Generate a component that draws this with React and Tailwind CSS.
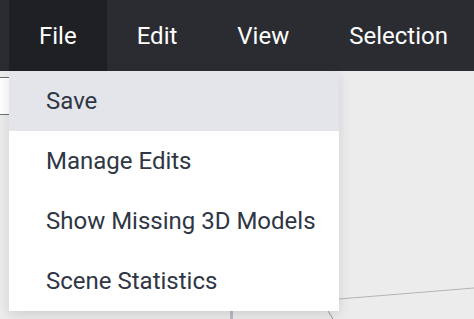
import React from 'react';

const menus = ['File', 'Edit', 'View', 'Selection'];
const fileItems = ['Save', 'Manage Edits', 'Show Missing 3D Models', 'Scene Statistics'];

const App = () => {
  return (
    <div className="w-[474px] h-[319px] overflow-hidden bg-[#ececec] flex flex-col" style={{ fontFamily: 'Roboto, "Liberation Sans", sans-serif' }}>
      {/* Barra de menús */}
      <div className="h-[71px] shrink-0 bg-[#2b2c31] flex pl-[9px]">
        {menus.map((m, i) => (
          <div
            key={m}
            className={`px-[30px] flex items-center text-[24px] text-white ${i === 0 ? 'bg-[#1f2023]' : ''}`}
          >
            {m}
          </div>
        ))}
      </div>

      {/* Lienzo */}
      <div className="relative flex-1">
        <div className="absolute left-0 top-[6px] w-[9px] h-[38px] bg-white border-y border-[#6b6f75]" />
        <svg className="absolute inset-0" width="474" height="248" viewBox="0 71 474 248">
          <line x1="339" y1="299" x2="474" y2="288" stroke="#b4b4b4" strokeWidth="1" />
          <line x1="328" y1="311" x2="333" y2="319" stroke="#9a9a9a" strokeWidth="1" />
          <rect x="230" y="311" width="3" height="8" fill="#b8bcc8" />
        </svg>

        {/* Menú desplegable de File */}
        <div className="absolute left-[9px] top-0 w-[330px] bg-white shadow-[0_4px_12px_rgba(0,0,0,0.12)] flex flex-col">
          {fileItems.map((item, i) => (
            <div
              key={item}
              className={`h-[60px] pl-[37px] flex items-center text-[24px] text-[#2f3644] ${i === 0 ? 'bg-[#e4e5ea]' : ''}`}
            >
              {item}
            </div>
          ))}
        </div>
      </div>
    </div>
  );
};

export default App;
